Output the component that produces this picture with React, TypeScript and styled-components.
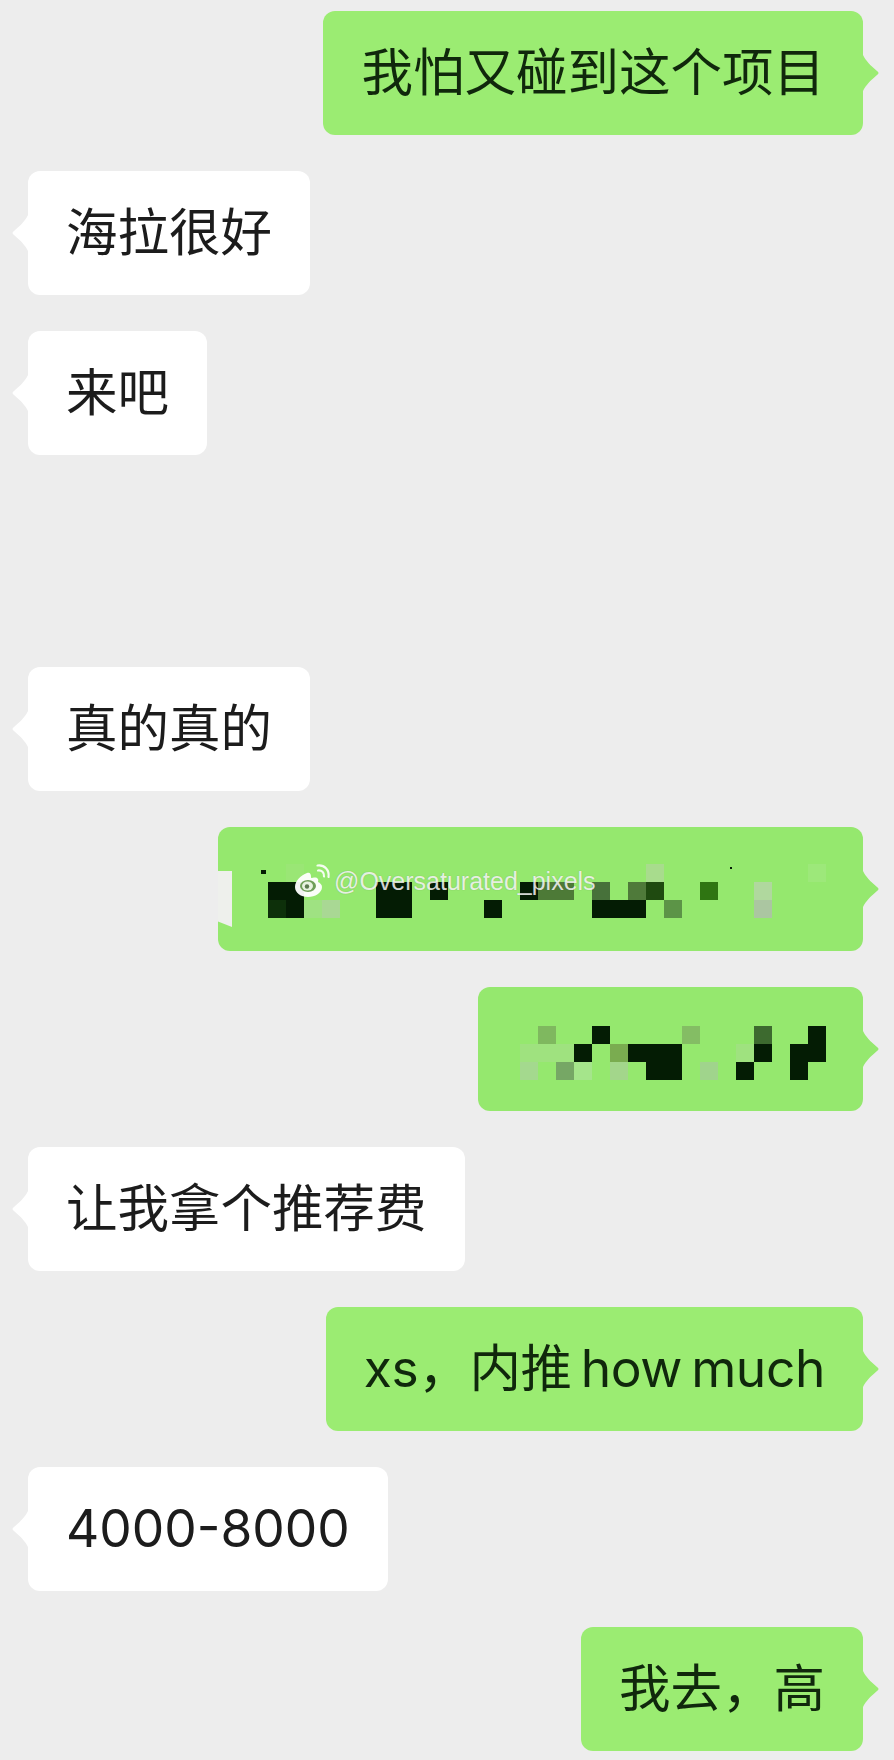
import React from 'react';
import styled, { createGlobalStyle } from 'styled-components';

const GlobalStyle = createGlobalStyle`
  html, body {
    margin: 0;
    padding: 0;
    background: #ededed;
  }
`;

type Block = [number, number, string];

const INK = '#041c04';

// 打码方块 [col, row, color]
const MOSAIC_A: Block[] = [
  [1, 0, '#9ae675'], [21, 0, '#a8dc8d'], [30, 0, '#9de87a'],
  [0, 1, INK], [1, 1, INK], [6, 1, INK], [7, 1, INK], [9, 1, INK], [14, 1, INK],
  [15, 1, '#4d7a37'], [16, 1, '#4d7a37'], [18, 1, '#47713a'], [20, 1, '#4f7a3a'],
  [21, 1, '#1f4a10'], [24, 1, '#2f7512'], [27, 1, '#b0d89e'],
  [0, 2, '#0d300a'], [1, 2, INK], [2, 2, '#9fe282'], [3, 2, '#a9d894'],
  [6, 2, INK], [7, 2, INK], [12, 2, INK], [18, 2, INK], [19, 2, INK], [20, 2, INK],
  [22, 2, '#5c9447'], [27, 2, '#abc6a1'],
];

const MOSAIC_B: Block[] = [
  [1, 0, '#7fb85f'], [4, 0, INK], [9, 0, '#84bd64'], [13, 0, '#3d6a2f'], [16, 0, INK],
  [0, 1, '#9fe27f'], [1, 1, '#9fe27f'], [2, 1, '#9fe27f'], [3, 1, INK], [5, 1, '#7aac50'],
  [6, 1, INK], [7, 1, INK], [8, 1, INK], [12, 1, '#9fe27f'], [13, 1, INK], [15, 1, INK], [16, 1, INK],
  [0, 2, '#a4d98e'], [2, 2, '#76a765'], [3, 2, '#a5e58b'], [5, 2, '#a3d68b'],
  [7, 2, INK], [8, 2, INK], [10, 2, '#a0d48c'], [12, 2, INK], [15, 2, INK],
];

const Mosaic = ({
  blocks,
  width,
  x,
  y,
  children,
}: {
  blocks: Block[];
  width: number;
  x: number;
  y: number;
  children?: React.ReactNode;
}) => (
  <svg width={width} height={124} viewBox={`0 0 ${width} 124`} style={{ display: 'block' }}>
    {blocks.map(([col, row, color]) => (
      <rect key={`${col}-${row}`} x={x + col * 18} y={y + row * 18} width={18} height={18} fill={color} />
    ))}
    {children}
  </svg>
);

const WeiboIcon = () => (
  <svg width="36" height="35" viewBox="0 0 36 35" fill="none">
    <path
      d="M12 10C6 12 0 18 0 24c0 6 6 10 13 10 7 0 14-4 14-10 0-2.500-2-4-4-5 1-3.500-1-5-4-4.500-2 .5-3 .8-3-.5 0-3-1-5-4-4Z"
      fill="#fff"
      fillOpacity="0.95"
    />
    <ellipse cx="13" cy="23" rx="8" ry="6" fill="#6f9f58" />
    <ellipse cx="12.500" cy="23" rx="5.500" ry="4.500" fill="#e8f3e0" />
    <circle cx="12" cy="23.500" r="2.200" fill="#5c7a50" />
    <path
      d="M23 7.500c3.500-.5 6.500 2 6 6M22.500 2.500c7-1 12 4.500 11 11.500"
      stroke="#fff"
      strokeOpacity="0.9"
      strokeWidth="2.200"
      strokeLinecap="round"
    />
  </svg>
);

const App = () => {
  return (
    <>
      <GlobalStyle />
      <Chat>
        <Row $mine>
          <Bubble $mine>
            <Text>我怕又碰到这个项目</Text>
          </Bubble>
        </Row>
        <Row>
          <Bubble>
            <Text>海拉很好</Text>
          </Bubble>
        </Row>
        <Row>
          <Bubble>
            <Text>来吧</Text>
          </Bubble>
        </Row>
        <Row $spaced>
          <Bubble>
            <Text>真的真的</Text>
          </Bubble>
        </Row>
        <Row $mine>
          <Bubble $mine $masked>
            <Mosaic blocks={MOSAIC_A} width={645} x={50} y={37}>
              <rect x={43} y={43} width={5} height={4} fill={INK} />
              <rect x={512} y={40} width={2} height={2} fill={INK} />
            </Mosaic>
            <Patch />
            <Watermark>
              <WeiboIcon />
              <Handle>@Oversaturated_pixels</Handle>
            </Watermark>
          </Bubble>
        </Row>
        <Row $mine>
          <Bubble $mine $masked>
            <Mosaic blocks={MOSAIC_B} width={385} x={42} y={39} />
          </Bubble>
        </Row>
        <Row>
          <Bubble>
            <Text>让我拿个推荐费</Text>
          </Bubble>
        </Row>
        <Row $mine>
          <Bubble $mine>
            <Text $tight>xs，内推 how much</Text>
          </Bubble>
        </Row>
        <Row>
          <Bubble>
            <Text>4000-8000</Text>
          </Bubble>
        </Row>
        <Row $mine>
          <Bubble $mine>
            <Text>我去，高</Text>
          </Bubble>
        </Row>
      </Chat>
    </>
  );
};

export default App;

const Chat = styled.main`
  display: flex;
  flex-direction: column;
  gap: 36px;
  box-sizing: border-box;
  width: 894px;
  height: 1760px;
  padding: 11px 31px 0 28px;
  overflow: hidden;
  background: #ededed;
`;

const Row = styled.div<{ $mine?: boolean; $spaced?: boolean }>`
  display: flex;
  justify-content: ${(props) => (props.$mine ? 'flex-end' : 'flex-start')};
  margin-top: ${(props) => (props.$spaced ? '176px' : '0')};
`;

const Bubble = styled.div<{ $mine?: boolean; $masked?: boolean }>`
  position: relative;
  height: 124px;
  box-sizing: border-box;
  padding: ${(props) => (props.$masked ? '0' : '0 38px')};
  display: flex;
  align-items: center;
  border-radius: 12px;
  color: ${(props) => (props.$mine ? '#10280c' : '#1c1c1c')};
  background: ${(props) => (props.$masked ? '#95e86e' : props.$mine ? '#9bec72' : '#ffffff')};

  &::after {
    content: '';
    position: absolute;
    top: 50%;
    margin-top: -18px;
    width: 16px;
    height: 36px;
    background: inherit;
    clip-path: path('M0 0 C3 6 7 10 14 16 Q17 18 14 20 C7 26 3 30 0 36 Z');
    ${(props) => (props.$mine ? 'right: -16px;' : 'left: -16px; transform: scaleX(-1);')}
  }
`;

const Text = styled.span<{ $tight?: boolean }>`
  display: block;
  font-family: Inter, 'Noto Sans CJK SC', sans-serif;
  font-size: 51.500px;
  line-height: 1;
  white-space: nowrap;
  letter-spacing: ${(props) => (props.$tight ? '-0.4px' : 'normal')};
  word-spacing: ${(props) => (props.$tight ? '-5px' : 'normal')};
`;

const Patch = styled.div`
  position: absolute;
  left: 0;
  top: 44px;
  width: 14px;
  height: 56px;
  background: #eef0ec;
  clip-path: polygon(0 0, 100% 0, 100% 100%, 0 90%);
`;

const Watermark = styled.div`
  position: absolute;
  left: 77px;
  top: 36px;
  display: flex;
  align-items: center;
  gap: 3px;
`;

const Handle = styled.span`
  font-family: 'Liberation Sans', Arial, sans-serif;
  font-size: 25px;
  line-height: 30px;
  color: rgba(255, 255, 255, 0.82);
  text-shadow: 0 0 1px rgba(60, 60, 60, 0.35);
  white-space: nowrap;
`;
